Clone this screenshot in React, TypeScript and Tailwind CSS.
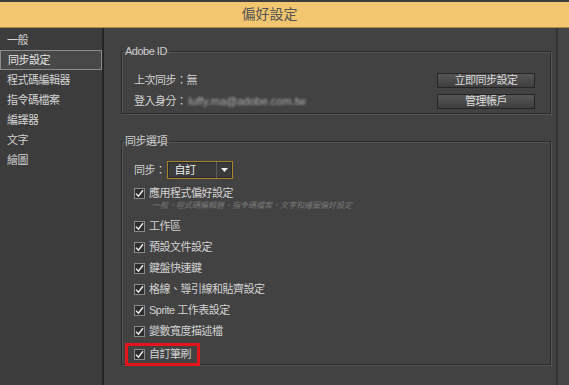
import React from "react";

const font = { fontFamily: '"Liberation Sans", "Noto Sans CJK TC", sans-serif' };

const sidebarItems = ["一般", "同步設定", "程式碼編輯器", "指令碼檔案", "編譯器", "文字", "繪圖"];

const syncItems = [
  "工作區",
  "預設文件設定",
  "鍵盤快速鍵",
  "格線、導引線和貼齊設定",
  "Sprite 工作表設定",
  "變數寬度描述檔",
];

function CheckBox() {
  return (
    <span className="flex h-[11px] w-[11px] shrink-0 items-center justify-center border border-[#8a8a8a] bg-[#2e2e2e]">
      <svg width="9" height="9" viewBox="0 0 9 9">
        <path d="M1 4.6 L3.4 7.2 L8 1.2" fill="none" stroke="#f0f0f0" strokeWidth="1.4" />
      </svg>
    </span>
  );
}

function CheckRow({ label }: { label: string }) {
  return (
    <div className="flex h-[21px] items-center gap-[4px]">
      <CheckBox />
      <span>{label}</span>
    </div>
  );
}

function GroupBox({ title, className, children }: { title: string; className: string; children: React.ReactNode }) {
  return (
    <fieldset
      className={`border border-[#2a2a2a] shadow-[1px_1px_0_#555,inset_1px_1px_0_#555] ${className}`}
    >
      <legend className="ml-[1px] px-[2px] text-[11px] leading-[14px] text-[#cfcfcf]">{title}</legend>
      {children}
    </fieldset>
  );
}

function Button({ label }: { label: string }) {
  return (
    <button className="flex h-[15px] w-[98px] items-center justify-center border border-[#252525] bg-gradient-to-b from-[#555] to-[#3f3f3f] text-[11px] leading-none text-[#dcdcdc]">
      {label}
    </button>
  );
}

export default function App() {
  return (
    <div
      className="flex h-[385px] w-[569px] flex-col overflow-hidden bg-[#424242] text-[11px] tracking-[-0.5px] text-[#d2d2d2]"
      style={font}
    >
      {/* title bar */}
      <div className="flex h-[28px] shrink-0 items-center justify-center border-t-2 border-b border-t-[#3e3e3e] border-b-[#a88a4e] bg-[#f2c56f] pr-[30px]">
        <span className="text-[14px] tracking-normal text-[#555]">偏好設定</span>
      </div>

      <div className="flex flex-1">
        {/* sidebar */}
        <div className="w-[102px] shrink-0 bg-[#3c3c3c] pt-[2px]">
          {sidebarItems.map((item) => (
            <div
              key={item}
              className={`flex h-[20px] items-center pl-[7px] ${
                item === "同步設定" ? "border border-[#8c8c8c] bg-[#484848] pl-[6px] text-[#e6e6e6]" : ""
              }`}
            >
              {item}
            </div>
          ))}
        </div>
        <div className="w-[2px] shrink-0 bg-[#262626]" />

        {/* main */}
        <div className="flex flex-1 border-r-2 border-[#333]">
          <div className="flex flex-1 flex-col pl-[17px] pt-[16px]">
            <GroupBox title="Adobe ID" className="h-[70px] w-[430px]">
              <div className="flex items-start justify-between pl-[12px] pr-[15px] pt-[12px]">
                <div className="flex flex-col">
                  <div className="flex h-[21px] items-center">上次同步：無</div>
                  <div className="flex h-[21px] items-center">
                    登入身分：
                    <span className="ml-[2px] text-[11px] tracking-normal text-[#b0b0b0] blur-[1.2px]">
                      luffy.ma@adobe.com.tw
                    </span>
                  </div>
                </div>
                <div className="flex flex-col gap-[6px] pt-[3px]">
                  <Button label="立即同步設定" />
                  <Button label="管理帳戶" />
                </div>
              </div>
            </GroupBox>

            <GroupBox title="同步選項" className="mt-[20px] h-[231px] w-[430px]">
              <div className="flex flex-col pl-[12px] pt-[12px]">
                <div className="flex h-[20px] items-center">
                  <span>同步：</span>
                  <div className="ml-[1px] flex h-[18px] w-[66px] items-center border border-[#a8842c] bg-[#3a3a3a] shadow-[inset_0_0_0_1px_#2a2a2a]">
                    <span className="flex-1 pl-[7px] text-[#eee]">自訂</span>
                    <span className="flex h-full w-[16px] items-center justify-center border-l border-[#5a5a5a]">
                      <svg width="7" height="4" viewBox="0 0 7 4">
                        <path d="M0 0 H7 L3.5 4 Z" fill="#eee" />
                      </svg>
                    </span>
                  </div>
                </div>
                <div className="mt-[3px] flex h-[21px] items-center gap-[4px]">
                  <CheckBox />
                  <span>應用程式偏好設定</span>
                </div>
                <div className="-mt-[3px] mb-[5px] pl-[18px] text-[8px] italic leading-[10px] tracking-normal text-[#777]">
                  一般、程式碼編輯器、指令碼檔案、文字和繪圖偏好設定
                </div>
                {syncItems.map((item) => (
                  <CheckRow key={item} label={item} />
                ))}
                <div className="-ml-[9px] mt-[1px] flex h-[23px] items-center gap-[4px] self-start border-[3px] border-[#e3141b] pl-[6px] pr-[6px]">
                  <CheckBox />
                  <span>自訂筆刷</span>
                </div>
              </div>
            </GroupBox>
          </div>
        </div>
        <div className="w-[11px] shrink-0 bg-[#454545]" />
      </div>
    </div>
  );
}
